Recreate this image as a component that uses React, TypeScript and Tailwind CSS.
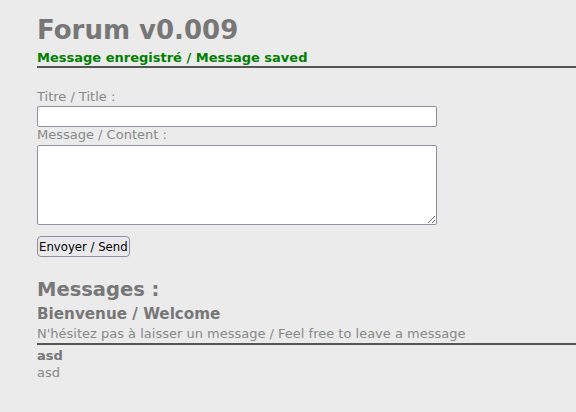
export default function App() {
  return (
    <div className="min-h-screen bg-[#ebebeb] pl-[37px] font-['DejaVu_Sans',sans-serif] text-[#777]">
      <div className="border-b-2 border-[#555] pt-[15px]">
        <h1 className="text-[26px] font-bold leading-[30px]">Forum v0.009</h1>
        <p className="mt-[5px] text-[13px] font-bold leading-[16px] text-[#008000]">
          Message enregistré / Message saved
        </p>
      </div>

      <form className="flex flex-col items-start pt-[21px]">
        <label className="text-[13px] leading-[16px] text-[#888]">Titre / Title :</label>
        <input
          type="text"
          className="mt-px h-[21px] w-[400px] rounded-[2px] border border-[#8f8f9d] bg-white"
        />
        <label className="text-[13px] leading-[16px] text-[#888]">Message / Content :</label>
        <textarea className="mt-[2px] h-[80px] w-[400px] rounded-[2px] border border-[#8f8f9d] bg-white" />
        <button
          type="button"
          className="mt-[11px] h-[21px] rounded-[4px] border border-[#8f8f9d] bg-[#e9e9ed] px-[1px] font-['DejaVu_Sans_Condensed','DejaVu_Sans',sans-serif] text-[13px] leading-[16px] text-black [font-stretch:condensed]"
        >
          Envoyer / Send
        </button>
      </form>

      <div className="pt-[22px]">
        <h2 className="text-[19.5px] font-bold leading-[22px]">Messages :</h2>
        <div className="border-b-2 border-[#555]">
          <h3 className="mt-[3px] text-[15.2px] font-bold leading-[20px]">Bienvenue / Welcome</h3>
          <p className="text-[13px] leading-[19px] text-[#888]">
            N'hésitez pas à laisser un message / Feel free to leave a message
          </p>
        </div>
        <div className="pt-[2px]">
          <p className="text-[13px] font-bold leading-[17px]">asd</p>
          <p className="text-[13px] leading-[17px] text-[#888]">asd</p>
        </div>
      </div>
    </div>
  );
}
